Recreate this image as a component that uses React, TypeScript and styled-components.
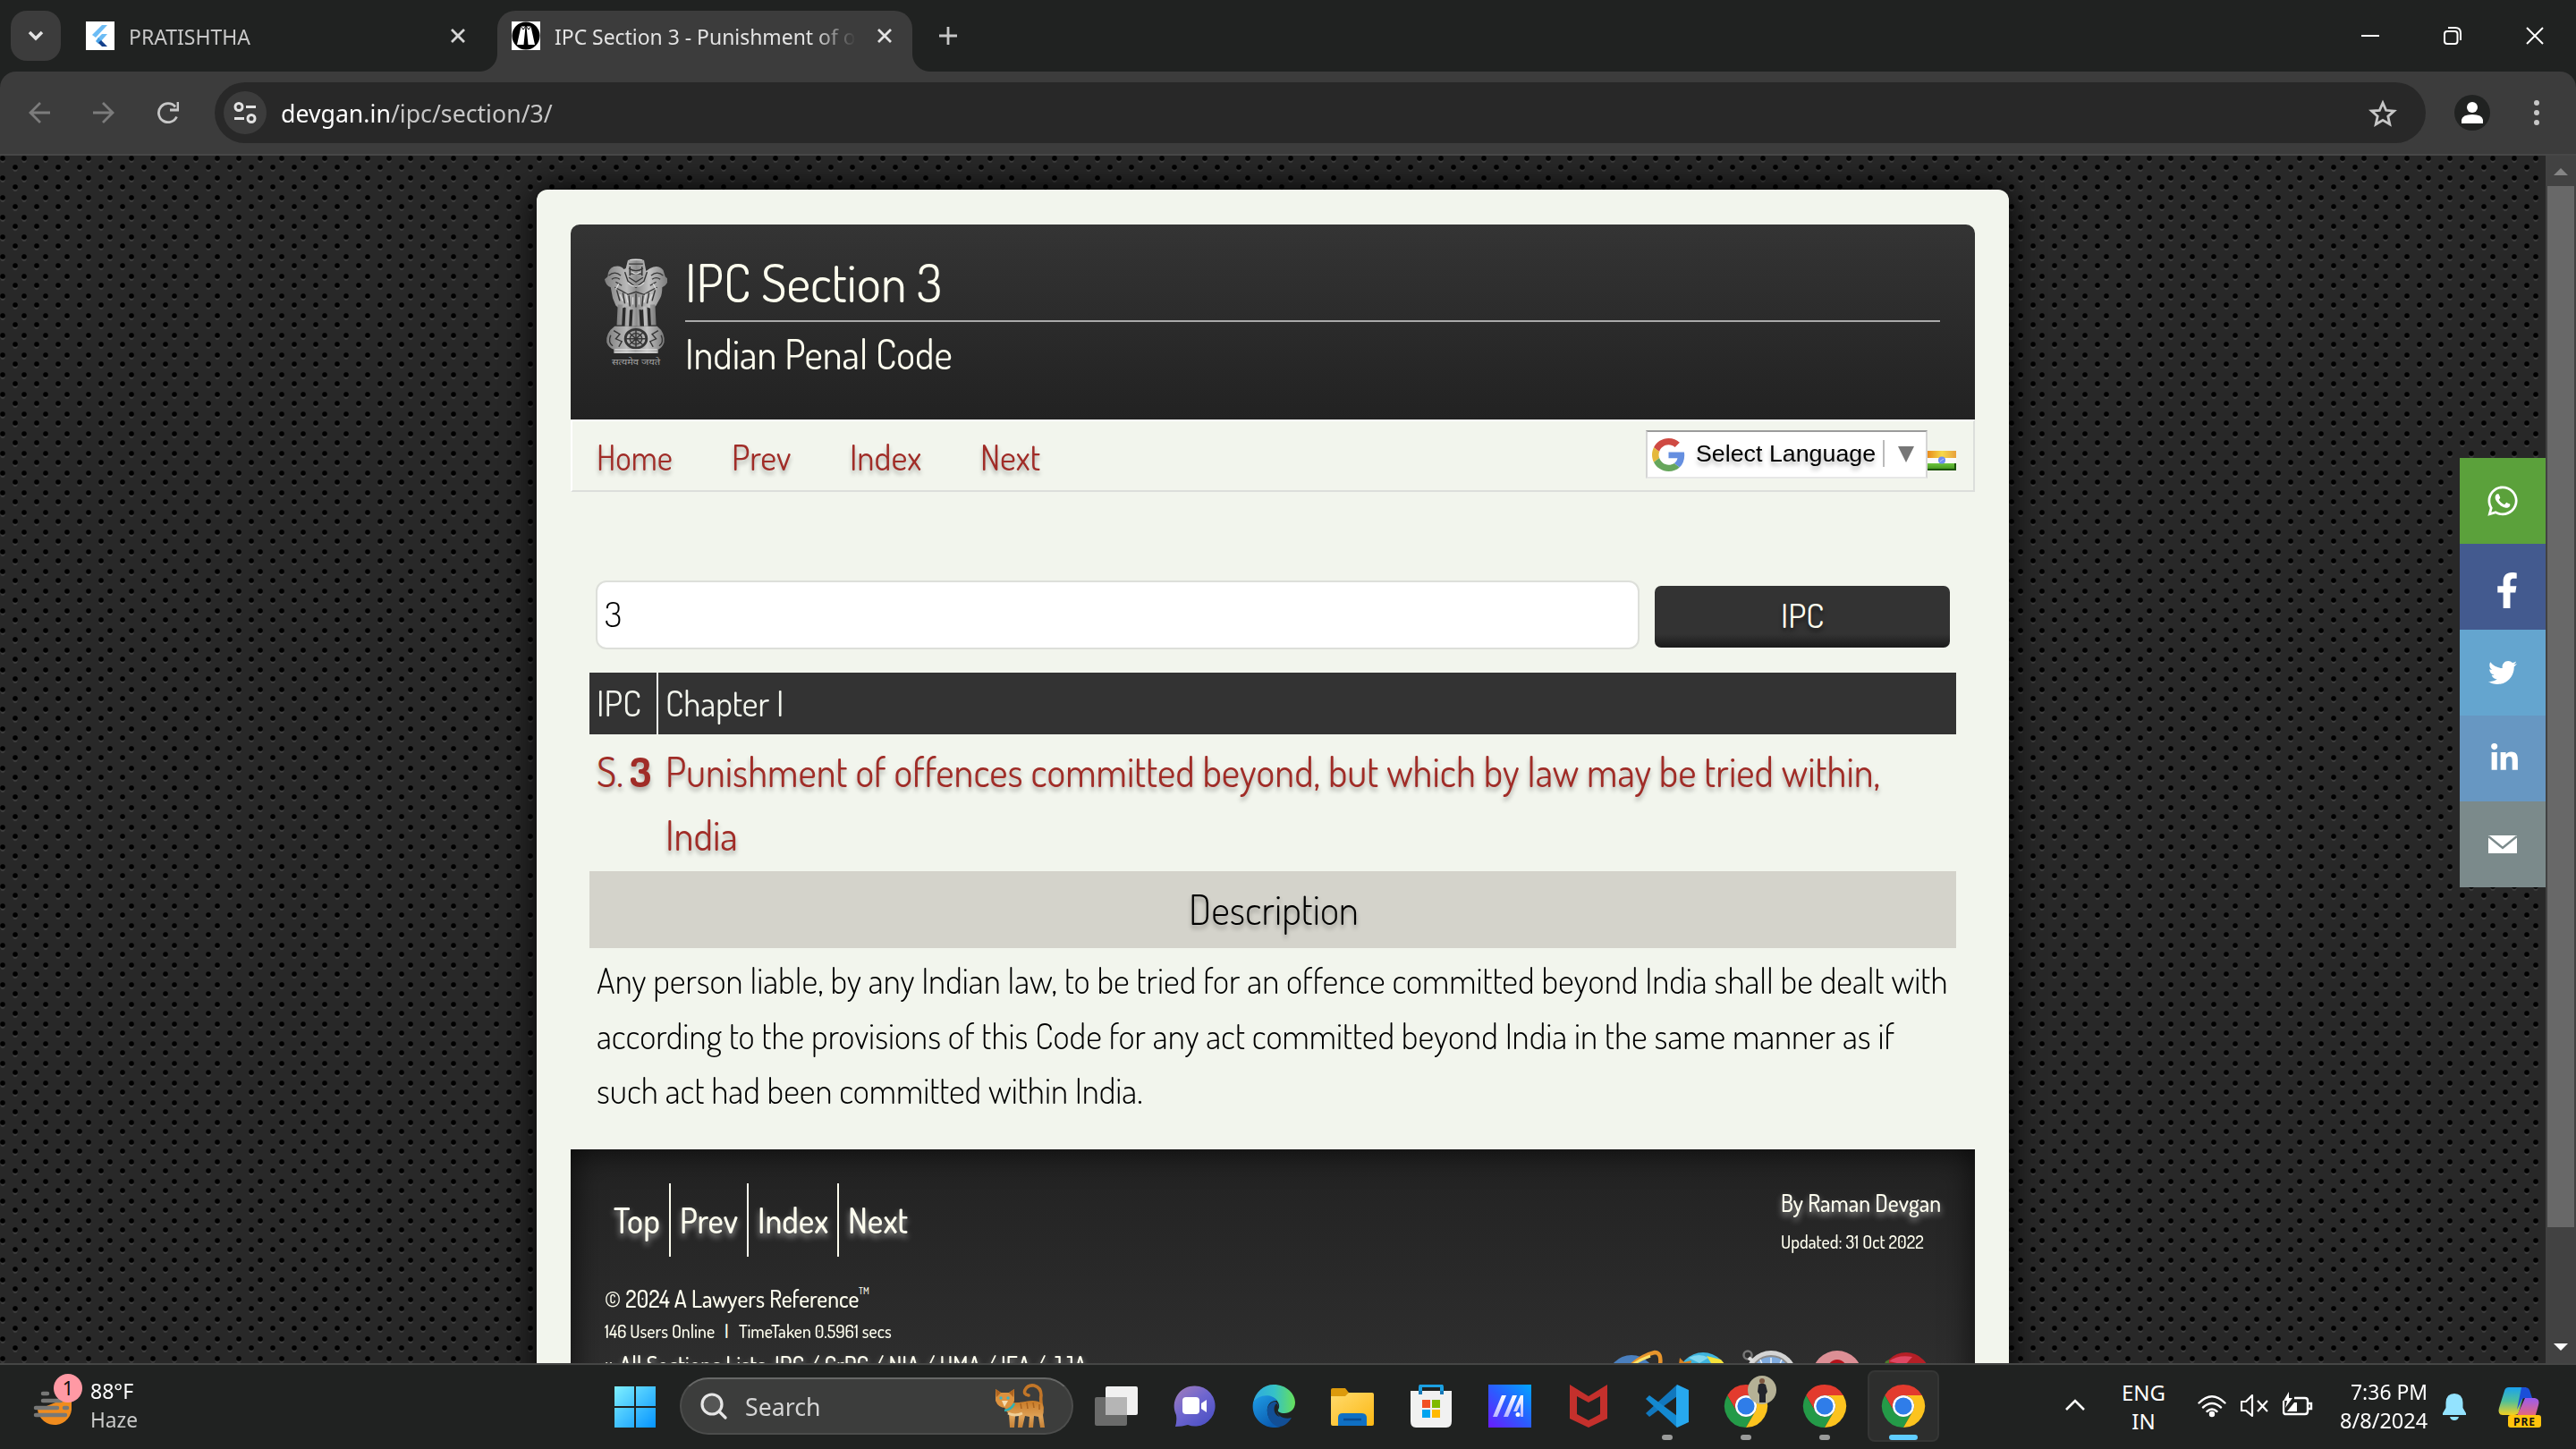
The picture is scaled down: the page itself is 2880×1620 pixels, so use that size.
import React, { useLayoutEffect, useRef, useState } from 'react';
import styled, { createGlobalStyle, css } from 'styled-components';
import { FaFacebookF, FaLinkedinIn, FaTwitter, FaWhatsapp } from 'react-icons/fa';

const ui = '"Segoe UI", "Noto Sans", "Open Sans", sans-serif';
const site = 'Dosis, Roboto, "Open Sans", sans-serif';
const cream = '#fdfdee';

const GlobalStyle = createGlobalStyle`
  * { box-sizing: border-box; }
  body { margin: 0; background: #202221; overflow: hidden; }
  svg { display: block; flex: none; }
`;

/* ---------- text that fills a set width ---------- */

const FitBox = styled.span<{ $w: number }>`
  display: inline-block;
  flex: none;
  width: ${(p) => p.$w}px;
  white-space: pre;
`;

const FitInner = styled.span`
  display: inline-block;
  transform-origin: 0 50%;
`;

function Fit({ w, children }: { w: number; children: React.ReactNode }) {
  const ref = useRef<HTMLSpanElement>(null);
  const [scale, setScale] = useState(1);
  useLayoutEffect(() => {
    if (ref.current) setScale(w / ref.current.offsetWidth);
  }, [w]);
  return (
    <FitBox $w={w}>
      <FitInner ref={ref} style={{ transform: `scaleX(${scale})` }}>
        {children}
      </FitInner>
    </FitBox>
  );
}

/* ---------- browser frame ---------- */

const Screen = styled.div`
  width: 2880px;
  height: 1620px;
  display: grid;
  grid-template-rows: 80px 94px 1350px 96px;
  background: #202221;
  overflow: hidden;
`;

const TabStrip = styled.div`
  display: flex;
  align-items: flex-start;
  padding: 12px 0 0 12px;
  font: 400 24px/1 ${ui};
`;

const TabSearch = styled.div`
  width: 56px;
  height: 56px;
  border-radius: 18px;
  background: #3c3c3c;
  display: grid;
  place-items: center;
`;

const Tab = styled.div<{ $active?: boolean }>`
  position: relative;
  display: flex;
  align-items: center;
  height: ${(p) => (p.$active ? 68 : 56)}px;
  width: ${(p) => (p.$active ? 464 : 488)}px;
  padding: ${(p) => (p.$active ? '0 23px 12px 16px' : '0 36px 0 28px')};
  color: ${(p) => (p.$active ? '#e3e3e3' : '#c7c7c7')};
  ${(p) =>
    p.$active &&
    css`
      background: #3c3c3c;
      border-radius: 20px 20px 0 0;
      &::before,
      &::after {
        content: '';
        position: absolute;
        bottom: 0;
        width: 20px;
        height: 20px;
      }
      &::before {
        left: -20px;
        background: radial-gradient(circle at 0 0, transparent 19.5px, #3c3c3c 20.5px);
      }
      &::after {
        right: -20px;
        background: radial-gradient(circle at 100% 0, transparent 19.5px, #3c3c3c 20.5px);
      }
    `}
`;

const TabTitle = styled.div<{ $fade?: boolean }>`
  flex: 1;
  margin: 0 24px 0 16px;
  overflow: hidden;
  line-height: 36px;
  padding-top: 1px;
  ${(p) => p.$fade && 'mask-image: linear-gradient(90deg, #000 86%, transparent);'}
`;

const NewTab = styled.div`
  padding: 18px 0 0 30px;
`;

const WindowButtons = styled.div`
  display: flex;
  gap: 72px;
  margin-left: auto;
  padding: 18px 36px 0 0;
`;

const Toolbar = styled.div`
  display: flex;
  align-items: center;
  background: #3c3c3c;
  border-bottom: 2px solid #474747;
  border-radius: 18px 18px 0 0;
  padding: 0 41px 0 32px;
`;

const NavIcons = styled.div`
  display: flex;
  gap: 48px;
  width: 208px;
`;

const Omnibox = styled.div`
  display: flex;
  align-items: center;
  width: 2472px;
  height: 68px;
  border-radius: 34px;
  background: #282828;
  padding: 0 32px 0 10px;
  font: 400 28px/40px ${ui};
  color: #c7c7c7;
`;

const SiteInfo = styled.div`
  width: 48px;
  height: 48px;
  border-radius: 24px;
  background: #3c3c3c;
  display: grid;
  place-items: center;
  margin-right: 16px;
`;

const Host = styled.span`
  color: #fff;
`;

const StarSlot = styled.div`
  margin-left: auto;
`;

const Avatar = styled.div`
  margin: 0 auto 0 32px;
`;

/* ---------- page ---------- */

const Viewport = styled.div`
  display: flex;
  min-height: 0;
`;

const Page = styled.div`
  position: relative;
  width: 2846px;
  height: 1350px;
  overflow: hidden;
  padding: 38px 0 0 600px;
  background-color: #282828;
  background-image: radial-gradient(circle at 3px 3px, #000 2.2px, transparent 3.5px),
    radial-gradient(circle at 17px 13px, #000 2.2px, transparent 3.5px),
    radial-gradient(circle at 3px 5.6px, #3e3e3e 1.8px, transparent 3px),
    radial-gradient(circle at 17px 15.6px, #3e3e3e 1.8px, transparent 3px);
  background-size: 24px 22px;
`;

const Sheet = styled.main`
  width: 1646px;
  height: 1500px;
  padding: 39px 38px 0;
  background: #f2f5ed;
  border-radius: 12px 12px 0 0;
  box-shadow: 0 0 36px #000;
  font-family: ${site};
  font-weight: 400;
`;

const Header = styled.header`
  display: flex;
  height: 218px;
  padding: 38px 39px 0 38px;
  border-radius: 10px 10px 0 0;
  background: linear-gradient(#343434, #222);
  color: ${cream};
`;

const Titles = styled.div`
  flex: 1;
  margin-left: 20px;
`;

const Title = styled.h1`
  margin: 0;
  height: 71px;
  font-size: 58px;
  font-weight: 400;
  line-height: 53px;
  border-bottom: 2px solid #a9a9a9;
`;

const Subtitle = styled.h2`
  margin: 0;
  font-size: 45px;
  font-weight: 400;
  line-height: 71px;
`;

const softShadow = css`
  text-shadow: 0 4px 5px rgba(0, 0, 0, 0.3);
`;

const NavBar = styled.nav`
  display: flex;
  height: 81px;
  border: 2px solid;
  border-color: #fff #dcdedb #dcdedb #fff;
  padding: 0 19px 0 27px;
  ${softShadow}
`;

const NavLinks = styled.div`
  display: flex;
  gap: 66px;
  font-size: 40px;
  line-height: 79px;
  color: #a02c27;
`;

const Translate = styled.div`
  display: flex;
  align-items: center;
  margin: 10px 0 0 auto;
  width: 315px;
  height: 54px;
  background: #fff;
  border: 2px solid;
  border-color: #9b9b9b #d5d5d5 #e7e7e7 #d5d5d5;
  padding-left: 5px;
  font: 400 26.67px/50px 'Liberation Sans', Arial, sans-serif;
  color: #000;
`;

const LangName = styled.span`
  margin: 0 8px 2px 12px;
`;

const Divider = styled.span`
  width: 2px;
  height: 30px;
  background: #bbb;
  margin: 0 15px 2px 0;
`;

const Flag = styled.div`
  margin-top: 33px;
`;

const SearchRow = styled.form`
  display: flex;
  align-items: center;
  gap: 17px;
  margin: 99px 0 0 28px;
`;

const SearchField = styled.div`
  width: 1167px;
  height: 77px;
  border: 2px solid #dddfda;
  border-radius: 12px;
  background: #fff;
  padding-left: 8px;
  font-size: 38px;
  font-weight: 350;
  line-height: 71px;
  color: #000;
`;

const SearchButton = styled.div`
  width: 330px;
  height: 69px;
  margin-top: 4px;
  border-radius: 7px;
  background: linear-gradient(#333 78%, #1a1a1a);
  color: ${cream};
  font-size: 38px;
  line-height: 64px;
  text-align: center;
  text-shadow: 0 4px 5px rgba(0, 0, 0, 0.5);
`;

const SectionTable = styled.section`
  width: 1528px;
  margin: 26px 0 0 21px;
`;

const Row = styled.div<{ $head?: boolean }>`
  display: grid;
  grid-template-columns: 77px 1fr;
  ${(p) =>
    p.$head
      ? css`
          height: 69px;
          background: #333;
          color: #f2f5ed;
          font-size: 40px;
          line-height: 67px;
        `
      : css`
          height: 153px;
          padding-top: 6px;
          color: #a02c27;
          font-size: 45px;
          line-height: 71px;
          ${softShadow}
        `}
`;

const Cell = styled.div<{ $rule?: boolean }>`
  padding-left: 8px;
  ${(p) => p.$rule && 'border-right: 2px solid #f6f8f0;'}
  b {
    font-weight: 700;
  }
`;

const SectionNo = styled(Cell)`
  display: flex;
  gap: 7px;
  height: 71px;
`;

const Band = styled.h3`
  margin: 0;
  height: 86px;
  background: #d4d3cb;
  font-size: 45px;
  font-weight: 350;
  line-height: 86px;
  text-align: center;
  color: #000;
  ${softShadow}
`;

const Paragraph = styled.p`
  margin: 5px 0 0 8px;
  font-size: 39px;
  font-weight: 350;
  line-height: 61.6px;
  color: #000;
`;

const Footer = styled.footer`
  display: flex;
  justify-content: space-between;
  height: 360px;
  margin-top: 35px;
  padding: 38px 38px 0;
  background: linear-gradient(#222, #303030 80%);
  box-shadow: inset 0 0 36px rgba(0, 0, 0, 0.75);
  color: ${cream};
  font-weight: 500;
`;

const glow = css`
  text-shadow: 0 4px 8px rgba(255, 255, 255, 0.6);
`;

const FootNav = styled.div`
  display: flex;
  height: 82px;
  font-size: 40px;
  line-height: 80px;
  ${glow}
`;

const FootLink = styled.span`
  padding: 0 10px;
  & + & {
    border-left: 2px solid ${cream};
  }
`;

const FootText = styled.div<{ $size: number; $line: number; $glow?: boolean }>`
  display: flex;
  font-size: ${(p) => p.$size}px;
  line-height: ${(p) => p.$line}px;
  ${(p) => p.$glow && glow}
`;

const Copyright = styled.div`
  padding-top: 24px;
`;

const Mark = styled.sup`
  font-size: 10px;
  line-height: 28px;
`;

const Pipe = styled.span`
  width: 17px;
  padding-left: 1px;
`;

const Online = styled.span`
  margin-right: 10px;
`;

const Credits = styled.div`
  display: flex;
  flex-direction: column;
  align-items: flex-end;
`;

const Author = styled.div`
  width: 179px;
`;

const Browsers = styled.div`
  margin-top: 99px;
  padding-right: 8px;
`;

const ShareBar = styled.aside`
  position: absolute;
  right: 0;
  top: 338px;
  width: 96px;
`;

const Share = styled.div<{ $bg: string; $dx?: number; $dy?: number }>`
  height: 96px;
  display: grid;
  place-items: center;
  padding: ${(p) => p.$dy || 0}px 0 0 ${(p) => p.$dx || 0}px;
  color: #fff;
  background: ${(p) => p.$bg};
`;

const Scrollbar = styled.div`
  width: 34px;
  background: #424242;
  display: flex;
  flex-direction: column;
  align-items: center;
  padding: 14px 0;
`;

const Thumb = styled.div`
  width: 30px;
  height: 1164px;
  margin: 12px 0 auto;
  background: #686868;
`;

/* ---------- taskbar ---------- */

const Taskbar = styled.div`
  display: flex;
  border-top: 2px solid #454645;
  background: #202221;
  font: 400 24px/32px ${ui};
  color: #fff;
`;

const Weather = styled.div`
  display: flex;
  gap: 7px;
  width: 687px;
  padding: 10px 0 0 36px;
`;

const WeatherText = styled.div`
  padding-top: 3px;
  color: #c9cac9;
  b {
    font-weight: 400;
    color: #fff;
  }
`;

const StartSlot = styled.div`
  width: 73px;
  padding-top: 24px;
`;

const SearchPill = styled.div`
  display: flex;
  align-items: center;
  width: 440px;
  height: 64px;
  margin-top: 14px;
  padding: 0 28px 0 21px;
  border: 2px solid #4c4d4c;
  border-top-color: #676867;
  border-radius: 32px;
  background: #3c3d3c;
  font-size: 27px;
  color: #d5d5d5;
`;

const PillLabel = styled.span`
  margin: 1px auto 0 20px;
`;

const Apps = styled.div`
  display: flex;
  gap: 8px;
  padding: 6px 0 0 8px;
`;

const AppSlot = styled.div<{ $active?: boolean }>`
  position: relative;
  width: 80px;
  height: 80px;
  padding: 14px 0 0 14px;
  border-radius: 8px;
  border: 2px solid ${(p) => (p.$active ? '#353635' : 'transparent')};
  background: ${(p) => (p.$active ? '#2d2e2d' : 'none')};
`;

const Running = styled.i<{ $active?: boolean }>`
  position: absolute;
  bottom: 0;
  left: ${(p) => (p.$active ? 22 : 32)}px;
  width: ${(p) => (p.$active ? 32 : 12)}px;
  height: 6px;
  border-radius: 3px;
  background: ${(p) => (p.$active ? '#60cdff' : '#9a9b9a')};
`;

const Tray = styled.div`
  display: flex;
  align-items: flex-start;
  margin-left: auto;
  padding-right: 37px;
`;

const TrayText = styled.div<{ $align: 'center' | 'right'; $w: number }>`
  width: ${(p) => p.$w}px;
  padding-top: 14px;
  text-align: ${(p) => p.$align};
`;

const Language = styled(TrayText)`
  padding: 15px 0 0 4px;
`;

const TraySlot = styled.div<{ $top: number; $left: number }>`
  padding: ${(p) => p.$top}px 0 0 ${(p) => p.$left}px;
`;

/* ---------- drawings ---------- */

const Cross = ({ size = 16, color = '#d5d5d5', sw = 2.8 }) => (
  <svg width={size} height={size} viewBox={`0 0 ${size} ${size}`} stroke={color} strokeWidth={sw}>
    <path d={`M1 1L${size - 1} ${size - 1}M${size - 1} 1L1 ${size - 1}`} />
  </svg>
);

const FlutterIcon = () => (
  <svg width="32" height="32">
    <rect width="32" height="32" fill="#fff" />
    <path d="M18 4h6L11 18l-4-3z" fill="#6cbcf5" />
    <path d="M18 14h6l-7 8-4-3z" fill="#6cbcf5" />
    <path d="M14 18l4 4-4 3-3-3z" fill="#4aa3e8" />
    <path d="M14 24l3-3 7 7h-6z" fill="#14408c" />
  </svg>
);

const BandsIcon = () => (
  <svg width="32" height="32">
    <rect width="32" height="32" fill="#fff" />
    <circle cx="16" cy="16" r="15.500" fill="#000" />
    <path d="M10.500 5.500h5L13.500 26H6z M16.500 5.500h5L26 26h-7.500z" fill="#fff" />
    <path d="M10 5l3 4 3-4 3 4 3-4" fill="none" stroke="#000" strokeWidth="1" />
  </svg>
);

const Emblem = () => (
  <svg width="70" height="121" viewBox="4 1 62 120" preserveAspectRatio="none">
    <defs>
      <linearGradient id="stone" x1="0" x2="1">
        <stop offset="0" stopColor="#7e7e7e" />
        <stop offset=".35" stopColor="#b9b9b9" />
        <stop offset=".5" stopColor="#8b8b8b" />
        <stop offset=".7" stopColor="#c2c2c2" />
        <stop offset="1" stopColor="#787878" />
      </linearGradient>
    </defs>
    <g fill="url(#stone)">
      <path d="M27 3q8-4 16 0l2 12 4-3q8-5 13 2l2 7 3 3q-1 7-6 9 0 8-2 12l-4 8-4 4-5-2-5 3-6-1-6 1-5-3-5 2-4-4-3-8-2-12q-5-2-6-9l3-3q0-8 6-11 7-2 10 3l2-1z" />
      <path d="M17 52h5l-1 23h-5zM25 54h4l-1 22h-4zM32 56h6l1 20h-8zM42 54h4l1 22h-4zM49 52h5l1 23h-5z" />
      <path d="M14 76h42q8 7 7 18-2 6-6 8v4H13v-4q-5-2-7-8-1-11 8-18z" />
    </g>
    <g fill="none" stroke="#363636" strokeWidth="1.300">
      <path d="M28 7h14M28 12q7 5 14 0M29 18h12M28 22l7 5 7-5M29 10v10M41 10v10M24 16l3 10 8 7 8-7 3-10M8 20q6-6 12 0M50 20q6-6 12 0M11 24q4-3 8 0M51 24q4-3 8 0M14 33l7 4 6 4 8-3 8 3 6-4 7-4M16 36l3 12M22 39l2 12M28 42l1 12M35 40v15M42 42l-1 12M48 39l-2 12M54 36l-3 12M15 27l6 4M55 27l-6 4" />
      <circle cx="35" cy="90" r="10.500" strokeWidth="2.500" />
      <circle cx="35" cy="90" r="6" />
      <path d="M35 80v20M25 90h20M28 83l14 14M42 83L28 97M13 81l6 4-4 5 6 3-3 6M57 81l-6 4 4 5-6 3 3 6M10 86q-3 8 2 12M60 86q3 8-2 12" />
    </g>
    <g fill="none" stroke="#dedede" strokeWidth="1.100">
      <path d="M29 2.500h12M31 16q4 4 8 0M27 28q8 8 16 0M14 102h42M14 105h42M18 29l-3 6M52 29l3 6M19 41l3 7M51 41l-3 7M25 40l2 10M45 40l-2 10M32 44v8M38 44v8" />
    </g>
    <text x="11" y="119" fontSize="10" fontFamily="Noto Sans, sans-serif" fill="#a2a2a2" textLength="48" lengthAdjust="spacingAndGlyphs">
      सत्यमेव जयते
    </text>
  </svg>
);

const GoogleG = () => (
  <svg width="37" height="37" viewBox="0 0 48 48">
    <path fill="#cf4a43" d="M24 9.500c3.540 0 6.710 1.220 9.210 3.600l6.850-6.850C35.900 2.380 30.470 0 24 0 14.620 0 6.510 5.380 2.560 13.220l7.980 6.190C12.430 13.720 17.740 9.500 24 9.500z" />
    <path fill="#658fe0" d="M46.980 24.550c0-1.570-.15-3.090-.38-4.550H24v9.020h12.940c-.58 2.960-2.260 5.480-4.780 7.180l7.730 6c4.510-4.180 7.090-10.360 7.090-17.650z" />
    <path fill="#e5b83c" d="M10.530 28.590c-.48-1.450-.76-2.990-.76-4.590s.27-3.140.76-4.590l-7.980-6.190C.92 16.460 0 20.120 0 24c0 3.880.92 7.540 2.560 10.780l7.970-6.190z" />
    <path fill="#66a65c" d="M24 48c6.480 0 11.930-2.130 15.890-5.810l-7.730-6c-2.150 1.450-4.920 2.300-8.160 2.300-6.260 0-11.570-4.220-13.470-9.910l-7.980 6.190C6.510 42.620 14.620 48 24 48z" />
  </svg>
);

const IndiaFlag = () => (
  <svg width="32" height="22">
    <defs>
      <linearGradient id="saf"><stop offset="0" stopColor="#e88b1c" /><stop offset=".5" stopColor="#f6d94a" /><stop offset="1" stopColor="#e8a03c" /></linearGradient>
      <linearGradient id="grn" x2="0" y2="1"><stop offset="0" stopColor="#6cc63e" /><stop offset="1" stopColor="#3a8a1a" /></linearGradient>
    </defs>
    <rect width="32" height="8" fill="url(#saf)" />
    <rect y="8" width="32" height="6" fill="#fafafa" />
    <rect y="14" width="32" height="8" fill="url(#grn)" />
    <path d="M0 21h32M31 14v8" stroke="#1c5208" strokeWidth="2" />
    <circle cx="16" cy="10.500" r="4" fill="#6f8df2" />
    <path d="M14 12l4-3" stroke="#b9c6fa" />
  </svg>
);

const BrowserLogos = () => (
  <svg width="366" height="56" viewBox="0 0 366 56">
    <circle cx="28" cy="34" r="27" fill="#4a7fbe" />
    <path d="M24 22Q38 8 54 4q8 0 6 14" fill="none" stroke="#e8952c" strokeWidth="4.500" />
    <path d="M25 21q10-8 24-13" stroke="#fbe36a" strokeWidth="3" fill="none" />
    <circle cx="108" cy="32" r="28" fill="#3fb4dd" />
    <path d="M92 10q12-6 22 0l-10 6z" fill="#7fd6ef" />
    <path d="M112 8l16 4 10 12-16 0z" fill="#f5e23a" />
    <path d="M82 10l5 5 8-2-2 12H80z" fill="#d9801f" />
    <circle cx="184" cy="31" r="29" fill="#d4d4d4" />
    <circle cx="184" cy="31" r="23" fill="#7fabdf" stroke="#8b8b8b" strokeWidth="2" />
    <path d="M184 10v6M172 12l2 5M196 12l-2 5" stroke="#e9f1fb" strokeWidth="1.500" />
    <circle cx="158" cy="7" r="4.500" fill="none" stroke="#777" strokeWidth="2.500" />
    <path d="M159 10l5 4" stroke="#ddd" strokeWidth="4" />
    <circle cx="258" cy="30" r="28" fill="#dc8f95" />
    <ellipse cx="258" cy="29" rx="13" ry="17" fill="#b3121a" />
    <circle cx="335" cy="31" r="27" fill="#b51f26" />
    <path d="M316 14q10-8 26-5l-8 9z" fill="#df4763" />
    <path d="M312 14l4-2v8h-6z" fill="#4d7a2c" />
  </svg>
);

const Tri = ({ up, color }: { up?: boolean; color: string }) => (
  <svg width="16" height="8">
    <path d={up ? 'M0 8L8 0l8 8z' : 'M0 0h16L8 8z'} fill={color} />
  </svg>
);

const ChromeLogo = ({ face }: { face?: boolean }) => (
  <svg width="48" height="48" viewBox="0 0 48 48" overflow="visible">
    <path d="M24 12h20.800A24 24 0 0 0 3.200 12l10.400 18A12 12 0 0 1 24 12z" fill="#e33b2e" />
    <path d="M34.400 30L24 48A24 24 0 0 1 3.200 12l10.400 18a12 12 0 0 0 20.800 0z" fill="#249a48" />
    <path d="M24 12h20.800A24 24 0 0 1 24 48l10.400-18A12 12 0 0 0 24 12z" fill="#fcc31e" />
    <circle cx="24" cy="24" r="12" fill="#fff" />
    <circle cx="24" cy="24" r="9.600" fill="#2f7de9" />
    {face && (
      <g>
        <circle cx="42" cy="6" r="16" fill="#b5b196" />
        <path d="M38 0q4-3 8 0l2 8-2 3v9h-7v-9l-2-3z" fill="#22242c" />
        <circle cx="42" cy="-4" r="3" fill="#7c5640" />
      </g>
    )}
  </svg>
);

const TaskView = () => (
  <svg width="48" height="48">
    <rect x="12" y="2" width="36" height="32" rx="2" fill="#f1f1f1" />
    <rect x="0" y="14" width="36" height="32" rx="2" fill="#6a6b6a" />
    <path d="M12 14h24v20H12z" fill="#b5b5b5" />
  </svg>
);

const Chat = () => (
  <svg width="48" height="48">
    <defs><linearGradient id="ch" x2=".8" y2="1"><stop offset="0" stopColor="#a57fb9" /><stop offset=".5" stopColor="#6f66cf" /><stop offset="1" stopColor="#4b50c4" /></linearGradient></defs>
    <path d="M24 1.500a22.500 22.500 0 1 1-8 43.500q-6 2-14 2 2-6 1-13A22.500 22.500 0 0 1 24 1.500z" fill="url(#ch)" />
    <rect x="10" y="14" width="19" height="19" rx="4" fill="#fff" />
    <path d="M31 21l6-4v14l-6-4z" fill="#fff" />
  </svg>
);

const Edge = () => (
  <svg width="48" height="48">
    <defs>
      <linearGradient id="e1"><stop offset="0" stopColor="#2fa8e0" /><stop offset=".5" stopColor="#35c1c8" /><stop offset="1" stopColor="#66e05a" /></linearGradient>
      <linearGradient id="e2" x2=".6" y2="1"><stop offset="0" stopColor="#1f9de6" /><stop offset="1" stopColor="#0b5cb0" /></linearGradient>
    </defs>
    <path d="M1 21C3 8 13 0 24 0c14 0 24 10 24 20 0 8-6 12-12 12-5 0-8-2-7-4 2-3 1-6 0-8C25 12 9 10 1 21z" fill="url(#e1)" />
    <path d="M1 20C6 11 22 9 28 18c-9-1-12 7-11 13 1 9 8 15 15 16C14 52-2 38 1 20z" fill="url(#e2)" />
    <path d="M17 31c-1-6 3-12 9-12 4 3 4 6 2 9-2 6 8 12 16 9-4 7-10 10-14 10-7-1-12-7-13-16z" fill="#124f96" />
    <path d="M27 21c3 3 2 6 1 8-1 3 1 5 3 7-6-1-9-10-4-15z" fill="#202221" />
  </svg>
);

const Folder = () => (
  <svg width="48" height="48">
    <defs><linearGradient id="fo" x2="1" y2="1"><stop offset="0" stopColor="#ffdb6e" /><stop offset="1" stopColor="#fcb813" /></linearGradient></defs>
    <path d="M0 6q0-2 2-2h14l4 5v8H0z" fill="#dc9a0c" />
    <path d="M0 13h16l4-4h26q2 0 2 2v33q0 2-2 2H2q-2 0-2-2z" fill="url(#fo)" />
    <path d="M8 46V37q0-5 5-5h21q6 0 6 5v9z" fill="#0f70c4" />
    <path d="M14 39h20" stroke="#0a4d92" strokeWidth="2.500" />
  </svg>
);

const Store = () => (
  <svg width="48" height="48">
    <path d="M12 10V3q0-2 2-2h20q2 0 2 2v7" fill="none" stroke="#1ba0e2" strokeWidth="4" />
    <path d="M1 7h46v34q0 7-6 7H7q-6 0-6-7z" fill="#f1f1f1" />
    <path d="M12 7v4M36 7v4" stroke="#1678b8" strokeWidth="4" />
    <path d="M14 17h9v9h-9z" fill="#f25022" /><path d="M25 17h9v9h-9z" fill="#7fba00" />
    <path d="M14 28h9v9h-9z" fill="#00a4ef" /><path d="M25 28h9v9h-9z" fill="#ffb900" />
  </svg>
);

const MyAsus = () => (
  <svg width="48" height="48">
    <defs>
      <linearGradient id="as" x1="0" y1="1" x2="1" y2="0"><stop offset="0" stopColor="#6a1bff" /><stop offset=".5" stopColor="#2b5cff" /><stop offset="1" stopColor="#00a6ff" /></linearGradient>
      <linearGradient id="bar" x2="0" y2="1"><stop offset="0" stopColor="#fff" /><stop offset="1" stopColor="#b9b6ff" /></linearGradient>
    </defs>
    <rect width="48" height="48" fill="url(#as)" />
    <path d="M5 36L15 12h5L10 36zM17 36l10-24h5L22 36zM28 30l8-18h3v24h-3V21l-4 9z" fill="url(#bar)" />
    <circle cx="33" cy="33.500" r="2.500" fill="#fff" />
  </svg>
);

const McAfee = () => (
  <svg width="48" height="48">
    <path fillRule="evenodd" d="M3 0l21 13L45 0v38L24 48 3 38zM11 13v20l13 7 13-7V13l-13 7z" fill="#c4302c" />
  </svg>
);

const VsCode = () => (
  <svg width="48" height="48">
    <path d="M35 0L0 32l4 4 31-23z" fill="#1177bd" />
    <path d="M35 48L0 16l4-4 31 23z" fill="#1489d0" />
    <path d="M35 0l13 6v36l-13 6q-1-1-1-3V3z" fill="#27a8ee" />
  </svg>
);

const Cat = () => (
  <svg width="58" height="50" viewBox="0 0 58 50">
    <defs>
      <linearGradient id="fur" x2="0" y2="1"><stop offset="0" stopColor="#c87a26" /><stop offset=".6" stopColor="#dfa257" /><stop offset="1" stopColor="#c68136" /></linearGradient>
    </defs>
    <path d="M38 13q-6-1-4-6 3-6 10-5 8 2 8 11-1 6 1 14" fill="none" stroke="#c27628" strokeWidth="3.600" strokeLinecap="round" />
    <path d="M12 21q12 1 22-1 12-3 19 2 3 6 1 13l2 14h-5l-2-12-5-1-1 13h-5l1-12-5-1-3 13h-5l1-14-4 1-1 13h-5l-1-15q-6-5-5-13z" fill="url(#fur)" />
    <path d="M1 6l6 4h9l6-4v13q-2 8-10 8T1 19z" fill="#dc923f" />
    <path d="M1 6l6 4-5 5zM22 6l-6 4 5 5z" fill="#b0651f" />
    <path d="M8 19l3 7 4-7z" fill="#f6dcb0" />
    <circle cx="7" cy="16" r="1.700" fill="#3fb4c4" /><circle cx="15" cy="16" r="1.700" fill="#3fb4c4" />
    <path d="M11 30q8-1 11-8" stroke="#2fb1b4" strokeWidth="2.600" fill="none" />
    <path d="M29 22l1 6M36 21l1 7M43 21l1 6M50 23v6" stroke="#a9631e" strokeWidth="1.500" />
    <path d="M15 33q8 4 16 0" stroke="#f0cf98" strokeWidth="3" fill="none" />
  </svg>
);

const Copilot = () => (
  <svg width="50" height="46">
    <defs>
      <linearGradient id="c1" x2="0" y2="1"><stop offset="0" stopColor="#1aa2f0" /><stop offset=".5" stopColor="#4fc09a" /><stop offset="1" stopColor="#f5d020" /></linearGradient>
      <linearGradient id="c2" x2="0" y2="1"><stop offset="0" stopColor="#9a5cf0" /><stop offset="1" stopColor="#f0686a" /></linearGradient>
    </defs>
    <path d="M12 1h19l-8 28q-1 3-5 3H5q-6 0-4-8L7 5q1-4 5-4z" fill="url(#c1)" />
    <path d="M26 1h4q5 0 6 6l2 6h-8q-4 0-5 5l-4 8z" fill="#1b4fd8" />
    <path d="M30 13h11q6 1 4 8l-4 14H20z" fill="url(#c2)" />
    <rect x="11" y="32" width="37" height="14" rx="3" fill="#ffc40c" />
    <text x="17" y="43.500" fontSize="12" fontWeight="700" fontFamily="Noto Sans, sans-serif" letterSpacing="1" fill="#111">PRE</text>
  </svg>
);

const WeatherIcon = () => (
  <svg width="58" height="60">
    <path d="M6 40a19 19 0 0 0 38 -4V28L26 32z" fill="#f08c1e" />
    <path d="M12 22h5M12 30h20M4 38h24M36 38h3M4 46h33" stroke="#777877" strokeWidth="4.500" strokeLinecap="round" />
    <circle cx="40" cy="16" r="16" fill="#ff99a4" />
    <text x="40" y="24" fontSize="22" textAnchor="middle" fontFamily="Noto Sans, sans-serif" fill="#111">1</text>
  </svg>
);

const line = { fill: 'none', strokeWidth: 2.8 } as const;

function FootItem({ w, children }: { w: number; children: string }) {
  return (
    <FootLink>
      <Fit w={w}>{children}</Fit>
    </FootLink>
  );
}

export default function App() {
  return (
    <Screen>
      <GlobalStyle />
      <TabStrip>
        <TabSearch>
          <svg width="18" height="12" {...line} stroke="#e3e3e3" strokeWidth="3.500"><path d="M2 2l7 7 7-7" /></svg>
        </TabSearch>
        <Tab>
          <FlutterIcon />
          <TabTitle><Fit w={136}>PRATISHTHA</Fit></TabTitle>
          <Cross />
        </Tab>
        <Tab $active>
          <BandsIcon />
          <TabTitle $fade><Fit w={337}>IPC Section 3 - Punishment of o</Fit></TabTitle>
          <Cross color="#e3e3e3" />
        </Tab>
        <NewTab>
          <svg width="20" height="20" stroke="#c7c7c7" strokeWidth="2.800"><path d="M10 0v20M0 10h20" /></svg>
        </NewTab>
        <WindowButtons>
          <svg width="20" height="20" stroke="#fff" strokeWidth="2"><path d="M0 10h20" /></svg>
          <svg width="20" height="20" fill="none" stroke="#fff" strokeWidth="2">
            <rect x="1" y="5" width="14.500" height="14" rx="3" />
            <path d="M5 1h8q6 0 6 6v8" />
          </svg>
          <Cross size={20} color="#fff" sw={2} />
        </WindowButtons>
      </TabStrip>

      <Toolbar>
        <NavIcons>
          <svg width="24" height="24" {...line} stroke="#7c7c7c"><path d="M24 12H2M13 1L2 12l11 11" /></svg>
          <svg width="24" height="24" {...line} stroke="#7c7c7c"><path d="M0 12h22M11 1l11 11-11 11" /></svg>
          <svg width="24" height="24" {...line} stroke="#c7c7c7"><path d="M21.500 16.500A10.500 10.500 0 1 1 20 5.500M23 0v9h-9" /></svg>
        </NavIcons>
        <Omnibox>
          <SiteInfo>
            <svg width="26" height="24" {...line} stroke="#e3e3e3" strokeWidth="3">
              <circle cx="6" cy="5.500" r="4" /><path d="M14 5.500h11M1 18.500h11" /><circle cx="20" cy="18.500" r="4" />
            </svg>
          </SiteInfo>
          <Fit w={304}><Host>devgan.in</Host>/ipc/section/3/</Fit>
          <StarSlot>
            <svg width="32" height="31" {...line} stroke="#c7c7c7"><path d="M16 4l3.600 8.300 9 .8-6.800 6 2 8.800L16 23.300 8.200 28l2-9-6.800-6 9-.7z" /></svg>
          </StarSlot>
        </Omnibox>
        <Avatar>
          <svg width="40" height="40">
            <circle cx="20" cy="20" r="20" fill="#202221" />
            <circle cx="20" cy="14" r="6" fill="#fff" />
            <path d="M8 32v-4q1-6 12-6t12 6v4z" fill="#fff" />
          </svg>
        </Avatar>
        <svg width="6" height="30" fill="#c7c7c7"><circle cx="3" cy="4" r="3" /><circle cx="3" cy="15" r="3" /><circle cx="3" cy="26" r="3" /></svg>
      </Toolbar>

      <Viewport>
        <Page>
          <Sheet>
            <Header>
              <Emblem />
              <Titles>
                <Title><Fit w={287}>IPC Section 3</Fit></Title>
                <Subtitle><Fit w={299}>Indian Penal Code</Fit></Subtitle>
              </Titles>
            </Header>
            <NavBar>
              <NavLinks>
                <Fit w={85}>Home</Fit>
                <Fit w={66}>Prev</Fit>
                <Fit w={80}>Index</Fit>
                <Fit w={67}>Next</Fit>
              </NavLinks>
              <Translate>
                <GoogleG />
                <LangName><Fit w={201}>Select Language</Fit></LangName>
                <Divider />
                <svg width="18" height="22"><path d="M0 2h18L9 20z" fill="#767676" /></svg>
              </Translate>
              <Flag><IndiaFlag /></Flag>
            </NavBar>
            <SearchRow>
              <SearchField><Fit w={19}>3</Fit></SearchField>
              <SearchButton><Fit w={48}>IPC</Fit></SearchButton>
            </SearchRow>
            <SectionTable>
              <Row $head>
                <Cell $rule><Fit w={50}>IPC</Fit></Cell>
                <Cell><Fit w={132}>Chapter I</Fit></Cell>
              </Row>
              <Row>
                <SectionNo><Fit w={30}>S.</Fit><b><Fit w={24}>3</Fit></b></SectionNo>
                <Cell>
                  <Fit w={1358}>Punishment of offences committed beyond, but which by law may be tried within,</Fit>
                  <br />
                  <Fit w={81}>India</Fit>
                </Cell>
              </Row>
              <Band><Fit w={190}>Description</Fit></Band>
              <Paragraph>
                <Fit w={1511}>Any person liable, by any Indian law, to be tried for an offence committed beyond India shall be dealt with</Fit>
                <Fit w={1451}>according to the provisions of this Code for any act committed beyond India in the same manner as if</Fit>
                <Fit w={611}>such act had been committed within India.</Fit>
              </Paragraph>
            </SectionTable>
            <Footer>
              <div>
                <FootNav>
                  <FootItem w={52}>Top</FootItem>
                  <FootItem w={65}>Prev</FootItem>
                  <FootItem w={79}>Index</FootItem>
                  <FootItem w={67}>Next</FootItem>
                </FootNav>
                <Copyright>
                  <FootText $size={26} $line={46}><Fit w={284}>© 2024 A Lawyers Reference</Fit><Mark><Fit w={12}>TM</Fit></Mark></FootText>
                  <FootText $size={21.5} $line={26}>
                    <Online><Fit w={123}>146 Users Online</Fit></Online><Pipe>|</Pipe><Fit w={171}>TimeTaken 0.5961 secs</Fit>
                  </FootText>
                  <FootText $size={27} $line={48} $glow>
                    <Online><Fit w={180}>» All Sections Lists</Fit></Online><Fit w={349}>IPC / CrPC / NIA / HMA / IEA / JJA</Fit>
                  </FootText>
                </Copyright>
              </div>
              <Credits>
                <Author>
                  <FootText $size={26} $line={44} $glow><Fit w={179}>By Raman Devgan</Fit></FootText>
                  <FootText $size={21} $line={42}><Fit w={160}>Updated: 31 Oct 2022</Fit></FootText>
                </Author>
                <Browsers><BrowserLogos /></Browsers>
              </Credits>
            </Footer>
          </Sheet>
          <ShareBar>
            <Share $bg="#5ba13b"><FaWhatsapp size={38} /></Share>
            <Share $bg="#435a8f" $dx={10} $dy={8}><FaFacebookF size={40} /></Share>
            <Share $bg="#64a5cf"><FaTwitter size={32} /></Share>
            <Share $bg="#6797c2" $dx={3}><FaLinkedinIn size={34} /></Share>
            <Share $bg="#7b8a8b">
              <svg width="32" height="20"><path d="M0 0h32v20H0z" fill="#fff" /><path d="M0 1l16 13L32 1" fill="none" stroke="#7b8a8b" strokeWidth="2.500" /></svg>
            </Share>
          </ShareBar>
        </Page>
        <Scrollbar>
          <Tri up color="#858585" />
          <Thumb />
          <Tri color="#fff" />
        </Scrollbar>
      </Viewport>

      <Taskbar>
        <Weather>
          <WeatherIcon />
          <WeatherText><b><Fit w={48}>88°F</Fit></b><br /><Fit w={53}>Haze</Fit></WeatherText>
        </Weather>
        <StartSlot>
          <svg width="46" height="46">
            <defs><linearGradient id="win" x2="1" y2="1"><stop offset="0" stopColor="#7ff0ff" /><stop offset="1" stopColor="#0594ff" /></linearGradient></defs>
            <path d="M0 0h22v22H0zM24 0h22v22H24zM0 24h22v22H0zM24 24h22v22H24z" fill="url(#win)" />
          </svg>
        </StartSlot>
        <SearchPill>
          <svg width="30" height="30" fill="none" stroke="#e6e6e6" strokeWidth="3.200" strokeLinecap="round">
            <circle cx="13" cy="13" r="11" fill="#555655" /><path d="M21 21l7 7" />
          </svg>
          <PillLabel><Fit w={84}>Search</Fit></PillLabel>
          <Cat />
        </SearchPill>
        <Apps>
          <AppSlot><TaskView /></AppSlot>
          <AppSlot><Chat /></AppSlot>
          <AppSlot><Edge /></AppSlot>
          <AppSlot><Folder /></AppSlot>
          <AppSlot><Store /></AppSlot>
          <AppSlot><MyAsus /></AppSlot>
          <AppSlot><McAfee /></AppSlot>
          <AppSlot><VsCode /><Running /></AppSlot>
          <AppSlot><ChromeLogo face /><Running /></AppSlot>
          <AppSlot><ChromeLogo /><Running /></AppSlot>
          <AppSlot $active><ChromeLogo /><Running $active /></AppSlot>
        </Apps>
        <Tray>
          <TraySlot $top={38} $left={0}>
            <svg width="24" height="14" fill="none" stroke="#fff" strokeWidth="2.600"><path d="M2 12L12 2l10 10" /></svg>
          </TraySlot>
          <Language $align="center" $w={125}>ENG<br />IN</Language>
          <TraySlot $top={33} $left={0}>
            <svg width="32" height="26" fill="none" stroke="#fff" strokeWidth="2.400" strokeLinecap="round">
              <path d="M1.500 9.500Q16-5 30.500 9.500M6 14.500q10-9 20 0M10.500 19q5.500-5 11 0" />
              <circle cx="16" cy="22" r="2" fill="#fff" />
            </svg>
          </TraySlot>
          <TraySlot $top={33} $left={16}>
            <svg width="32" height="26" fill="none" stroke="#fff" strokeWidth="2.200" strokeLinejoin="round">
              <path d="M1 8h5l7-7v23l-7-6H1zM19 7l11 12M30 7L19 19" />
            </svg>
          </TraySlot>
          <TraySlot $top={30} $left={15}>
            <svg width="34" height="28" fill="none" stroke="#fff" strokeWidth="2.400">
              <path d="M13 7h12q3 0 3 3v12q0 3-3 3H4q-3 0-3-3V10M29 13h3v6h-3" />
              <path d="M5 22l8-10h3v10z" fill="#fff" stroke="none" />
              <path d="M7 0L1 10h4l-2 8 8-11H7z" fill="#fff" stroke="none" />
            </svg>
          </TraySlot>
          <TrayText $align="right" $w={128}><Fit w={86}>7:36 PM</Fit><br /><Fit w={98}>8/8/2024</Fit></TrayText>
          <TraySlot $top={32} $left={17}>
            <svg width="26" height="30" fill="#93e3ff"><path d="M13 0q9 0 9.500 10v6l3.500 6v2H0v-2l3.500-6v-6Q4 0 13 0zM8 26h10q-1 4-5 4t-5-4z" /></svg>
          </TraySlot>
          <TraySlot $top={24} $left={36}><Copilot /></TraySlot>
        </Tray>
      </Taskbar>
    </Screen>
  );
}
